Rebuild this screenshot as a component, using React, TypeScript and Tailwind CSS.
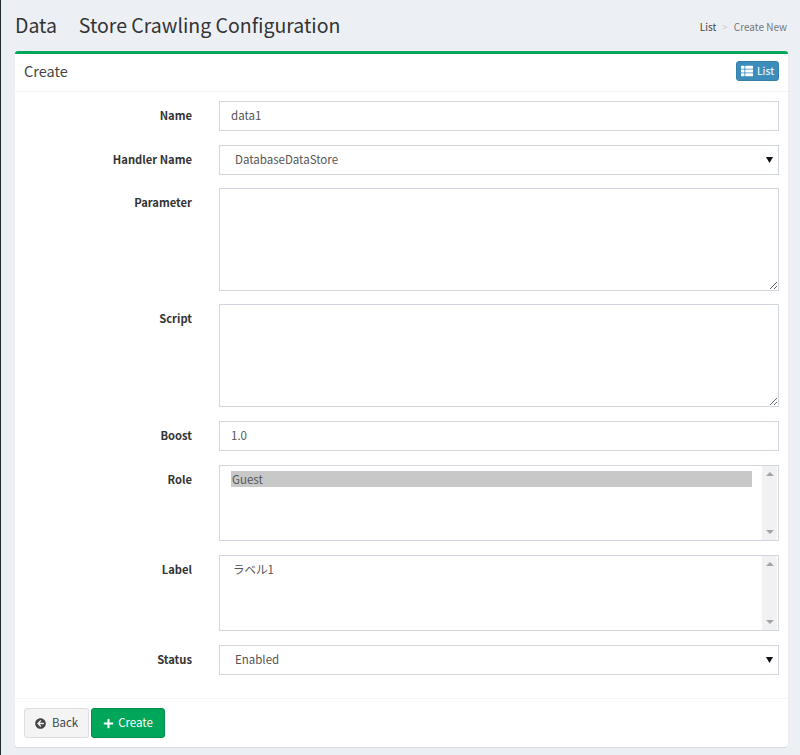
import { FaArrowCircleLeft, FaPlus, FaThList } from "react-icons/fa";
import type { ReactNode } from "react";

const fieldClass =
  "block w-full border border-[#d2d6de] bg-white text-[11.5px] text-[#555] outline-none rounded-none";

const Row = ({
  label,
  className,
  children,
}: {
  label: string;
  className: string;
  children: ReactNode;
}) => {
  return (
    <div className={`flex ${className}`}>
      <label className="w-[177px] pt-[4px] text-right text-[11.2px] leading-5 font-bold text-[#333]">
        {label}
      </label>
      <div className="ml-[27px] w-[560px]">{children}</div>
    </div>
  );
};

const SelectField = ({ value }: { value: string }) => {
  return (
    <div className="relative">
      <select
        defaultValue={value}
        className={`${fieldClass} h-[30px] appearance-none pl-[15px] pr-[11px]`}
      >
        <option value={value}>{value}</option>
      </select>
      <svg
        className="absolute right-[6px] top-[12px]"
        width="7"
        height="6"
        viewBox="0 0 7 6"
      >
        <path d="M0 0h7L3.5 6z" fill="#111" />
      </svg>
    </div>
  );
};

const ListBox = ({ children }: { children: ReactNode }) => {
  return (
    <div className="flex h-[76px] w-full border border-[#d2d6de] bg-white text-[11.5px] text-[#555]">
      <div className="flex-1 pl-[11px] pr-[10px] pt-[5px] leading-4">{children}</div>
      <div className="mr-px flex w-[15px] flex-col items-center justify-between bg-[#f1f1f1] py-[6px]">
        <svg width="8" height="4" viewBox="0 0 8 4">
          <path d="M4 0 8 4H0z" fill="#a3a3a3" />
        </svg>
        <svg width="8" height="4" viewBox="0 0 8 4">
          <path d="M0 0h8L4 4z" fill="#a3a3a3" />
        </svg>
      </div>
    </div>
  );
};

const App = () => {
  return (
    <div className="h-[755px] overflow-hidden border-l border-l-[#222d32] bg-[#ecf0f5] font-['Noto_Sans_CJK_JP','Noto_Sans',sans-serif] text-[#333]">
      {/* page header */}
      <div className="flex h-[51px] items-start justify-between pl-[14px] pr-[13px]">
        <h1 className="mt-[8px] whitespace-pre text-[19.5px] leading-[34px] font-normal">
          Data{"     "}Store Crawling Configuration
        </h1>
        <div className="mt-[18px] flex text-[10px] leading-[18px]">
          <span className="text-[#444]">List</span>
          <span className="mx-[6px] text-[#ccc]">&gt;</span>
          <span className="text-[#777]">Create New</span>
        </div>
      </div>

      {/* box */}
      <div className="ml-[14px] w-[773px] rounded-[3px] border-t-[3px] border-t-[#00a65a] bg-white shadow-[0_1px_1px_rgba(0,0,0,0.1)]">
        <div className="flex h-[38px] items-center justify-between border-b border-b-[#f4f4f4] pl-[9px] pr-[9px]">
          <h3 className="-mt-[4px] text-[14.5px] leading-5 font-normal text-[#444]">Create</h3>
          <button className="-mt-[3px] flex h-5 w-[43px] items-center justify-center gap-[4px] rounded-[3px] border border-[#367fa9] bg-[#3c8dbc] text-[10.5px] text-white">
            <FaThList className="size-[12px]" />
            List
          </button>
        </div>

        <div className="pt-[9px]">
          <Row label="Name" className="mb-[14px]">
            <input readOnly value="data1" className={`${fieldClass} h-[30px] pb-[2px] px-[11px]`} />
          </Row>
          <Row label="Handler Name" className="mb-[13px]">
            <SelectField value="DatabaseDataStore" />
          </Row>
          <Row label="Parameter" className="mb-[13px]">
            <textarea readOnly className={`${fieldClass} h-[103px] px-[11px] py-[5px]`} />
          </Row>
          <Row label="Script" className="mb-[14px]">
            <textarea readOnly className={`${fieldClass} h-[103px] px-[11px] py-[5px]`} />
          </Row>
          <Row label="Boost" className="mb-[14px]">
            <input readOnly value="1.0" className={`${fieldClass} h-[30px] pb-[2px] px-[11px]`} />
          </Row>
          <Row label="Role" className="mb-[14px]">
            <ListBox>
              <div className="bg-[#c8c8c8] pl-px">Guest</div>
            </ListBox>
          </Row>
          <Row label="Label" className="mb-[14px]">
            <ListBox>
              <div className="pl-[2px]">ラベル1</div>
            </ListBox>
          </Row>
          <Row label="Status" className="mb-[23px]">
            <SelectField value="Enabled" />
          </Row>
        </div>

        <div className="flex h-[49px] items-start gap-[2px] border-t border-t-[#f4f4f4] pl-[9px] pt-[9px]">
          <button className="flex h-[30px] w-[65px] items-center justify-center gap-[6px] rounded-[3px] border border-[#ddd] bg-[#f4f4f4] text-[11.5px] text-[#444]">
            <FaArrowCircleLeft className="size-[11px]" />
            Back
          </button>
          <button className="flex h-[30px] w-[74px] items-center justify-center gap-[4px] rounded-[3px] border border-[#008d4c] bg-[#00a65a] text-[11.5px] text-white">
            <FaPlus className="size-[11px]" />
            Create
          </button>
        </div>
      </div>
    </div>
  );
};

export default App;
